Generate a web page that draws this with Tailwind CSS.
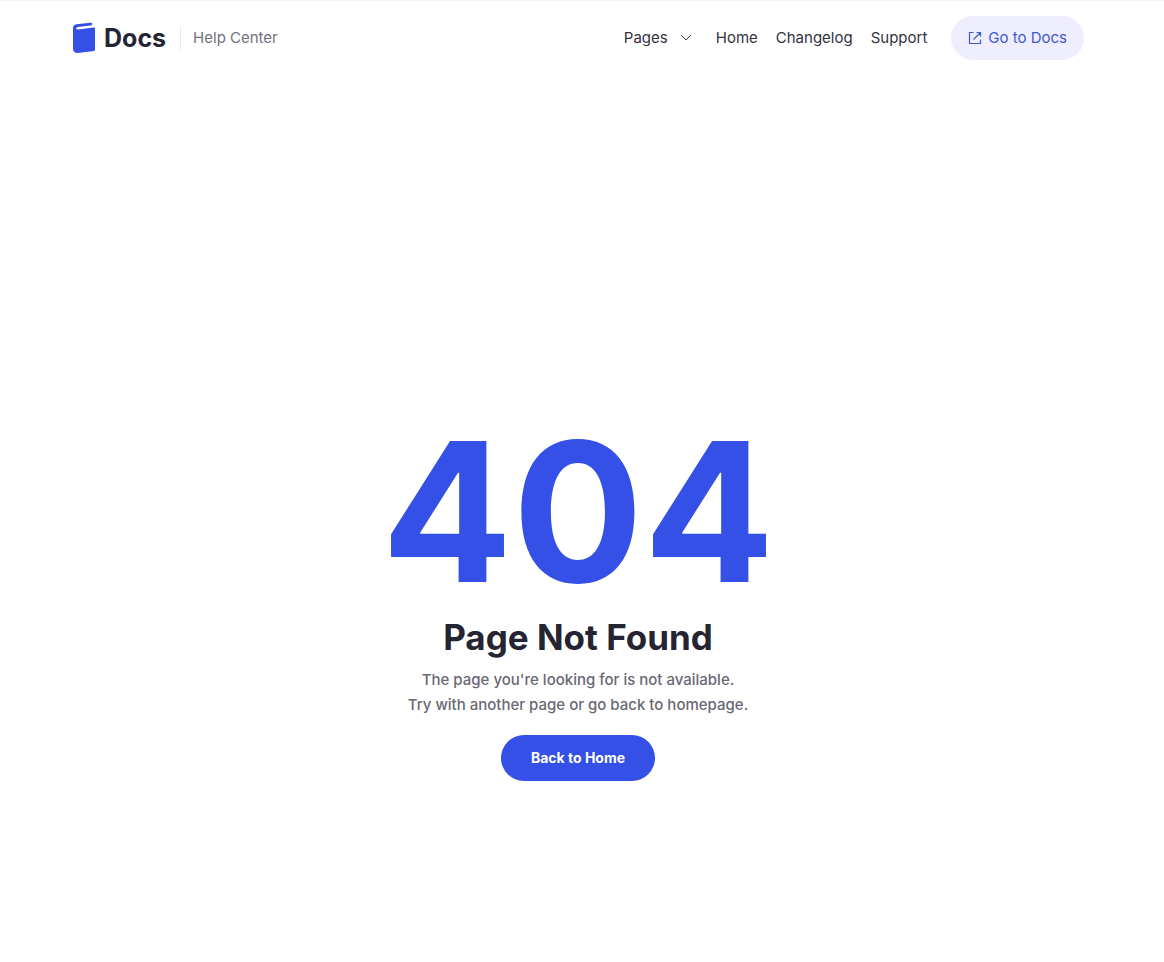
<!DOCTYPE html>
<html lang="en">
  <head>
    <meta charset="UTF-8" />
    <meta name="viewport" content="width=device-width, initial-scale=1.0" />
    <title>Page Not Found | Docs Help Center</title>
    <script src="https://cdn.jsdelivr.net/npm/@tailwindcss/browser@4"></script>
  </head>
  <body
    class="min-h-screen flex flex-col pr-2 bg-white border-t border-[#f7f7f8] font-['Inter',sans-serif] text-[#252432]"
  >
    <!-- Header -->
    <header class="flex items-center justify-between px-18 pt-[15px]">
      <div class="flex items-center">
        <a href="#" class="flex items-center gap-2">
          <svg class="w-6 h-8" viewBox="0 0 24 32" fill="none" aria-hidden="true">
            <path
              d="M1 6.2C1 3.9 2.4 2.6 4.4 2.3L18.3.8C20.8.6 21 3 18.8 3.4L6 5C3.6 5.3 3.5 7.6 5.9 7.4L21.5 5.4C22.4 5.3 23 5.8 23 6.7V27.6C23 28.4 22.6 28.8 21.8 28.9L5.8 31C3.1 31.3 1 29.4 1 26.7Z"
              fill="#3450e6"
            />
          </svg>
          <span class="text-[25px] leading-8 font-bold">Docs</span>
        </a>
        <span class="ml-3.5 mr-3 h-6 w-px bg-[#e9e9ee]"></span>
        <span class="text-[15px] text-[#72717d]">Help Center</span>
      </div>

      <!-- Nav links -->
      <nav class="flex items-center gap-4.5 text-[15px] text-[#33323f]">
        <button class="flex items-center gap-3 mr-1.5">
          Pages
          <svg class="w-3 h-3" viewBox="0 0 12 12" fill="none" stroke="currentColor" aria-hidden="true">
            <path d="M1.5 3.5L6 8L10.5 3.5" stroke-linecap="round" stroke-linejoin="round" />
          </svg>
        </button>
        <a href="#">Home</a>
        <a href="#">Changelog</a>
        <a href="#">Support</a>
        <a
          href="#"
          class="ml-1.5 flex items-center gap-1.5 h-11 px-[17px] rounded-full bg-[#efeefe] text-[#4058cc]"
        >
          <svg class="w-3.5 h-3.5" viewBox="0 0 14 14" fill="none" stroke="currentColor" stroke-width="1.2" aria-hidden="true">
            <path d="M5.5 1.5H1.5V12.5H12.5V8.5M8.5 1.5H12.5V5.5M12.5 1.5L5.5 8.5" />
          </svg>
          Go to Docs
        </a>
      </nav>
    </header>

    <!-- Error message -->
    <main class="flex-1 flex flex-col items-center justify-center pt-[175px] text-center">
      <p class="text-[194px] leading-48 font-bold text-[#3450e6]">404</p>
      <h1 class="mt-[5px] text-[35px] leading-12 font-bold">Page Not Found</h1>
      <p class="mt-1.5 text-[15px] leading-[25px] font-medium text-[#696874]">
        The page you're looking for is not available.<br />
        Try with another page or go back to homepage.
      </p>
      <a
        href="#"
        class="mt-4.5 flex items-center h-[46px] px-7.5 rounded-full bg-[#3450e6] text-sm font-bold text-white"
      >
        Back to Home
      </a>
    </main>
  </body>
</html>
